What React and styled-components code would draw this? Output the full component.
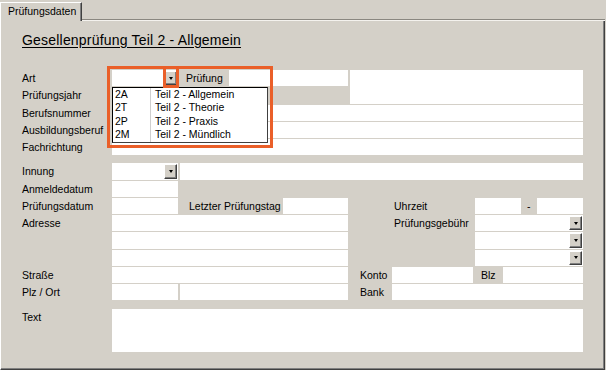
import React from 'react';
import styled, { createGlobalStyle } from 'styled-components';

const Global = createGlobalStyle`
  html, body { margin: 0; padding: 0; background: #d4d0c8; }
  body {
    font-family: "Liberation Sans", Arial, sans-serif;
    font-size: 10.5px;
    color: #000;
    overflow: hidden;
  }
`;

const Window = styled.div`
  position: relative;
  width: 606px;
  height: 370px;
  background: #d4d0c8;
  display: flex;
  flex-direction: column;
`;

const TabStrip = styled.div`
  height: 21px;
  display: flex;
  align-items: flex-end;
  flex: none;
`;

const Tab = styled.div`
  width: 82px;
  height: 19px;
  box-sizing: border-box;
  border-top: 1px solid #fff;
  border-left: 1px solid #fff;
  border-right: 1px solid #404040;
  box-shadow: inset -1px 0 0 #808080;
  padding-left: 7px;
  line-height: 17px;
  white-space: nowrap;
`;

const TabLine = styled.div`
  flex: 1;
  height: 2px;
  box-sizing: border-box;
  border-top: 1px solid #8a8780;
  border-bottom: 1px solid #f4f2ee;
  margin-right: 1px;
`;

const Panel = styled.div`
  width: 605px;
  flex: 1;
  box-sizing: border-box;
  border-left: 1px solid #fff;
  border-right: 1px solid #404040;
  border-bottom: 1px solid #404040;
  box-shadow: inset -1px -1px 0 #808080;
  padding: 11px 0 0 21px;
  display: flex;
  flex-direction: column;
`;

const Title = styled.h1`
  margin: 0;
  font-family: "Liberation Sans", Arial, sans-serif;
  font-weight: normal;
  font-size: 14px;
  letter-spacing: 0.2px;
  line-height: 17px;
  text-decoration: underline;
  text-underline-offset: 2px;
  color: #000;
`;

const Form = styled.div`
  margin-top: 21px;
  display: flex;
  flex-direction: column;
`;

const Group = styled.div`
  display: flex;
  align-items: flex-start;
  margin-top: ${p => p.$mt ?? 0}px;
`;

const Column = styled.div`
  display: flex;
  flex-direction: column;
  width: ${p => p.$w}px;
`;

const Row = styled.div`
  display: flex;
  height: 16.25px;
  margin-bottom: 1px;
`;

const Label = styled.div`
  flex: none;
  width: ${p => p.$w ?? 90}px;
  padding-left: ${p => p.$pad ?? 0}px;
  box-sizing: border-box;
  line-height: 16.25px;
  white-space: nowrap;
`;

const Field = styled.div`
  flex: none;
  width: ${p => p.$w}px;
  height: ${p => (p.$h ? `${p.$h}px` : 'auto')};
  margin-left: ${p => p.$ml ?? 0}px;
  background: #fff;
`;

const Cap = styled.div`
  flex: none;
  width: ${p => p.$w}px;
  margin-left: ${p => p.$ml ?? 0}px;
  padding-left: ${p => p.$pad ?? 0}px;
  box-sizing: border-box;
  line-height: 16.25px;
  white-space: nowrap;
`;

const ComboBox = styled(Field)`
  display: flex;
  justify-content: flex-end;
  padding: 1px;
  box-sizing: border-box;
`;

const DropButton = styled.div`
  width: 13px;
  height: 100%;
  box-sizing: border-box;
  background: #d4d0c8;
  border-top: 1px solid #fff;
  border-left: 1px solid #fff;
  border-right: 1px solid #404040;
  border-bottom: 1px solid #404040;
  box-shadow: inset -1px -1px 0 #808080;
  display: flex;
  align-items: center;
  justify-content: center;
  &::after {
    content: '';
    width: 0;
    height: 0;
    border-left: 2px solid transparent;
    border-right: 2px solid transparent;
    border-top: 3px solid #000;
  }
`;

const Combo = ({ w, ml }) => (
  <ComboBox $w={w} $ml={ml}>
    <DropButton />
  </ComboBox>
);

const DropList = styled.div`
  position: absolute;
  left: 112px;
  top: 87px;
  width: 156px;
  box-sizing: border-box;
  background: #fff;
  border: 1px solid #000;
  border-right-color: #404040;
  border-bottom-color: #404040;
  display: flex;
  flex-direction: column;
`;

const ListRow = styled.div`
  display: grid;
  grid-template-columns: 38px 1fr;
  height: 13.4px;
  line-height: 13.4px;
  white-space: nowrap;
`;

const Code = styled.div`
  padding-left: 2px;
  border-right: 1px solid #cfcfcf;
`;

const Desc = styled.div`
  padding-left: 4px;
`;

const Highlight = styled.div`
  position: absolute;
  left: ${p => p.$x}px;
  top: ${p => p.$y}px;
  width: ${p => p.$w}px;
  height: ${p => p.$h}px;
  box-sizing: border-box;
  border: ${p => p.$b}px solid #ea5f29;
  pointer-events: none;
`;

const items = [
  ['2A', 'Teil 2 - Allgemein'],
  ['2T', 'Teil 2 - Theorie'],
  ['2P', 'Teil 2 - Praxis'],
  ['2M', 'Teil 2 - Mündlich'],
];

export default function App() {
  return (
    <>
      <Global />
      <Window>
        <TabStrip>
          <Tab>Prüfungsdaten</Tab>
          <TabLine />
        </TabStrip>
        <Panel>
          <Title>Gesellenprüfung Teil 2 - Allgemein</Title>
          <Form>
            <Group>
              <Column $w={326}>
                <Row>
                  <Label>Art</Label>
                  <Combo w={66} />
                  <Cap $w={49} $ml={2} $pad={6}>Prüfung</Cap>
                  <Field $w={119} />
                </Row>
                <Row>
                  <Label>Prüfungsjahr</Label>
                  <Field $w={66} />
                </Row>
              </Column>
              <Field $w={233} $h={33.5} $ml={2} />
            </Group>
            <Row>
              <Label>Berufsnummer</Label>
              <Field $w={471} />
            </Row>
            <Row>
              <Label>Ausbildungsberuf</Label>
              <Field $w={471} />
            </Row>
            <Row>
              <Label>Fachrichtung</Label>
              <Field $w={471} />
            </Row>

            <Group $mt={7} style={{ flexDirection: 'column' }}>
              <Row>
                <Label>Innung</Label>
                <Combo w={66} />
                <Field $w={403} $ml={2} />
              </Row>
              <Row>
                <Label>Anmeldedatum</Label>
                <Field $w={66} />
              </Row>
              <Row>
                <Label>Prüfungsdatum</Label>
                <Field $w={66} />
                <Cap $w={105} $pad={11}>Letzter Prüfungstag</Cap>
                <Field $w={65} />
                <Label $w={127} $pad={46}>Uhrzeit</Label>
                <Field $w={46} />
                <Cap $w={16} $pad={6}>-</Cap>
                <Field $w={46} />
              </Row>
              <Row>
                <Label>Adresse</Label>
                <Field $w={236} />
                <Label $w={127} $pad={46}>Prüfungsgebühr</Label>
                <Combo w={108} />
              </Row>
              <Row>
                <Label />
                <Field $w={236} />
                <Label $w={127} />
                <Combo w={108} />
              </Row>
              <Row>
                <Label />
                <Field $w={236} />
                <Label $w={127} />
                <Combo w={108} />
              </Row>
              <Row>
                <Label>Straße</Label>
                <Field $w={236} />
                <Label $w={44} $pad={12}>Konto</Label>
                <Field $w={81} />
                <Cap $w={30} $pad={8}>Blz</Cap>
                <Field $w={80} />
              </Row>
              <Row>
                <Label>Plz / Ort</Label>
                <Field $w={66} />
                <Field $w={168} $ml={2} />
                <Label $w={44} $pad={12}>Bank</Label>
                <Field $w={191} />
              </Row>
            </Group>

            <Group $mt={7.5}>
              <Label>Text</Label>
              <Field $w={471} $h={43} />
            </Group>
          </Form>
        </Panel>

        <DropList>
          {items.map(([c, d]) => (
            <ListRow key={c}>
              <Code>{c}</Code>
              <Desc>{d}</Desc>
            </ListRow>
          ))}
        </DropList>
        <Highlight $x={107} $y={66} $w={166} $h={82} $b={3} />
        <Highlight $x={163} $y={66} $w={16} $h={22} $b={3} />
      </Window>
    </>
  );
}
